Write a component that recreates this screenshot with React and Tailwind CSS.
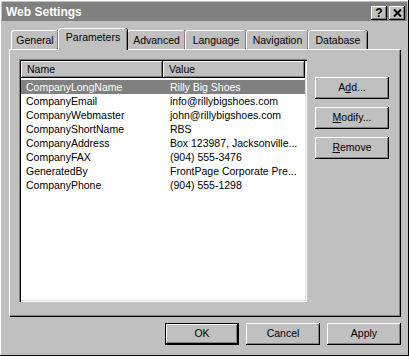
// Win95-style "Web Settings" property sheet, Parameters tab open.

const PARAMS = [
  ["CompanyLongName", "Rilly Big Shoes"],
  ["CompanyEmail", "info@rillybigshoes.com"],
  ["CompanyWebmaster", "john@rillybigshoes.com"],
  ["CompanyShortName", "RBS"],
  ["CompanyAddress", "Box 123987, Jacksonville..."],
  ["CompanyFAX", "(904) 555-3476"],
  ["GeneratedBy", "FrontPage Corporate Pre..."],
  ["CompanyPhone", "(904) 555-1298"],
];

const TABS = [
  { label: "General", w: "w-[47px]" },
  { label: "Parameters", w: "w-[69px]", active: true },
  { label: "Advanced", w: "w-[58px]" },
  { label: "Language", w: "w-[61px]" },
  { label: "Navigation", w: "w-[62px]" },
  { label: "Database", w: "w-[59px]" },
];

const raised =
  "shadow-[inset_-1px_-1px_0_#000,inset_1px_1px_0_#fff,inset_-2px_-2px_0_#808080]";

export default function App() {
  return (
    <div
      className="w-[409px] h-[356px] bg-[#c0c0c0] p-[2px] text-black shadow-[inset_-1px_-1px_0_#000,inset_1px_1px_0_#fff]"
      style={{ fontFamily: '"Liberation Sans", Arial, sans-serif' }}
    >
      {/* Title bar */}
      <div className="flex h-[19px] items-center justify-between bg-[#808080] pl-[4px] pr-[2px]">
        <span className="text-[12px] font-bold text-white">Web Settings</span>
        <div className="mt-[3px] flex gap-[2px]">
          <TitleButton>?</TitleButton>
          <TitleButton>
            <svg width="9" height="8" viewBox="0 0 9 8">
              <path d="M1 0.5 L8 7.5 M8 0.5 L1 7.5" stroke="#000" strokeWidth="2" />
            </svg>
          </TitleButton>
        </div>
      </div>

      {/* Tabs */}
      <div className="mt-[7px] flex h-[21px] items-end pl-[9px]">
        {TABS.map((t) => (
          <div
            key={t.label}
            className={`${t.w} relative flex items-center justify-center rounded-t-[3px] border-l border-t border-white text-[10.5px] shadow-[inset_-1px_0_0_#808080,1px_0_0_#000] ${
              t.active ? "z-10 -mb-px h-[22px] bg-[#c0c0c0] pb-[3px]" : "h-[19px] pt-px"
            }`}
          >
            {t.label}
          </div>
        ))}
      </div>

      {/* Tab page */}
      <div className="ml-[7px] flex h-[267px] w-[391px] gap-[8px] border-l border-t border-white pl-[9px] pt-[9px] shadow-[inset_-1px_-1px_0_#808080,1px_1px_0_#000]">
        {/* List view */}
        <div className="h-[243px] w-[288px] bg-white p-[2px] shadow-[inset_1px_1px_0_#808080,inset_2px_2px_0_#000,inset_-1px_-1px_0_#fff,inset_-2px_-2px_0_#dfdfdf]">
          <div className="flex h-[17px] text-[10.5px]">
            <div className={`w-[142px] bg-[#c0c0c0] pl-[6px] leading-[17px] ${raised}`}>Name</div>
            <div className={`flex-1 bg-[#c0c0c0] pl-[6px] leading-[17px] ${raised}`}>Value</div>
          </div>
          <div className="mt-[2px]">
            {PARAMS.map(([name, value], i) => (
              <div
                key={name}
                className={`flex h-[14px] text-[10.5px] leading-[14px] ${
                  i === 0 ? "bg-[#808080] text-white" : ""
                }`}
              >
                <span className="w-[149px] pl-[5px]">{name}</span>
                <span className="whitespace-nowrap">{value}</span>
              </div>
            ))}
          </div>
        </div>

        {/* Side buttons */}
        <div className="mt-[18px] flex flex-col gap-[8px]">
          <Button>
            A<u>d</u>d...
          </Button>
          <Button>
            <u>M</u>odify...
          </Button>
          <Button>
            <u>R</u>emove
          </Button>
        </div>
      </div>

      {/* Dialog buttons */}
      <div className="mt-[7px] flex justify-end gap-[7px] pr-[6px]">
        <Button isDefault>OK</Button>
        <Button>Cancel</Button>
        <Button>Apply</Button>
      </div>
    </div>
  );
}

function Button({ children, isDefault }) {
  return (
    <div
      className={`flex h-[22px] w-[74px] items-center justify-center bg-[#c0c0c0] text-[10.5px] ${
        isDefault
          ? "border border-black shadow-[inset_-1px_-1px_0_#000,inset_1px_1px_0_#fff,inset_-2px_-2px_0_#808080]"
          : raised
      }`}
    >
      <span>{children}</span>
    </div>
  );
}

function TitleButton({ children }) {
  return (
    <div
      className={`flex h-[14px] w-[16px] items-center justify-center bg-[#c0c0c0] text-[12px] font-bold leading-none ${raised}`}
    >
      {children}
    </div>
  );
}
